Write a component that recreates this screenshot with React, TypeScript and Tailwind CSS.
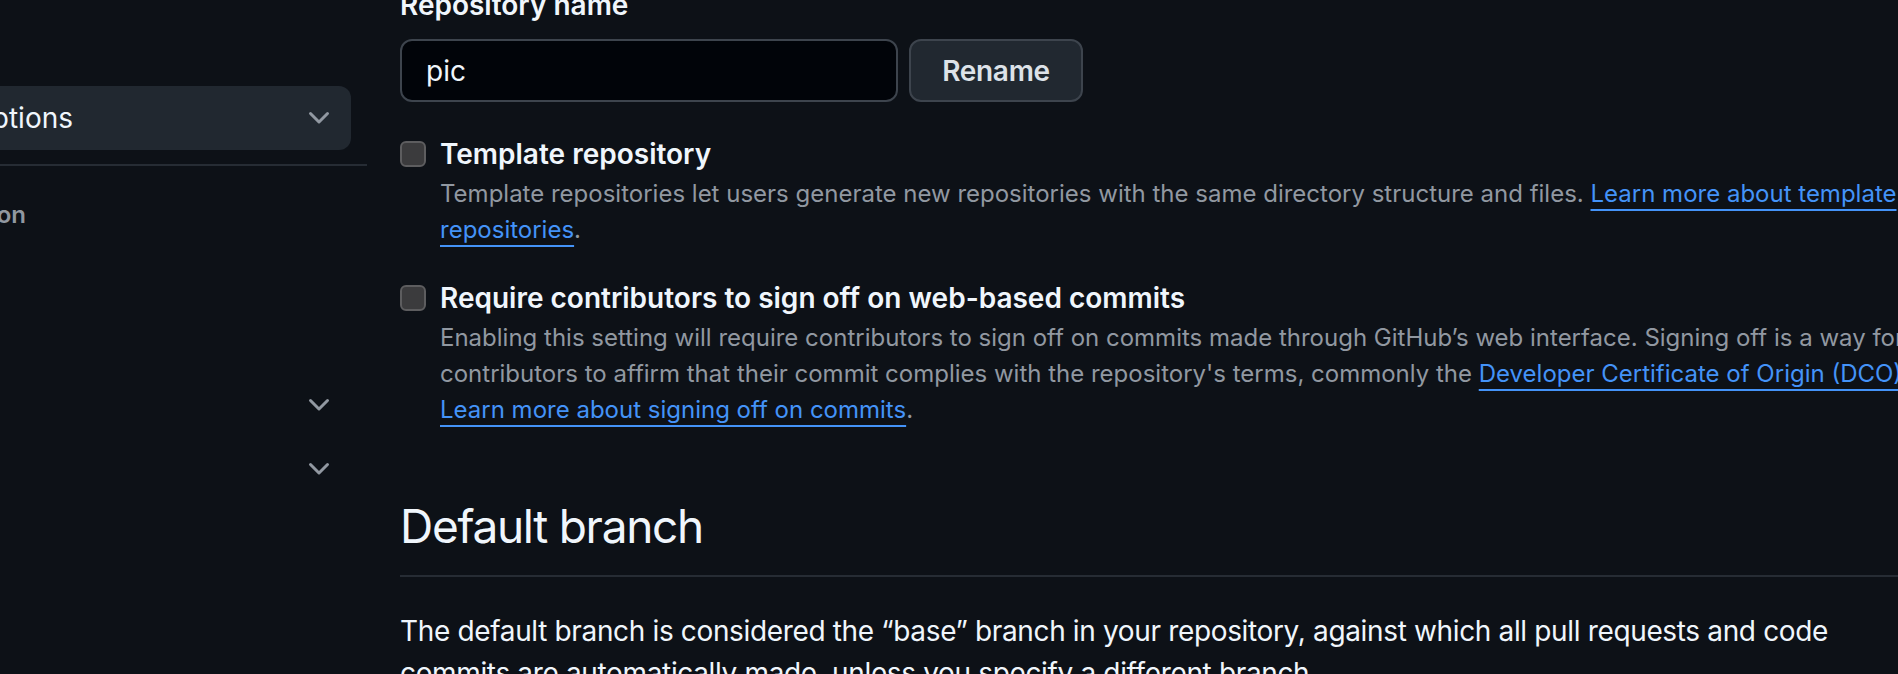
import React from "react";

function Chevron() {
  return (
    <svg width="32" height="32" viewBox="0 0 16 16" fill="#9198a1" aria-hidden="true">
      <path d="M12.78 5.22a.749.749 0 0 1 0 1.06l-4.25 4.25a.749.749 0 0 1-1.06 0L3.22 6.28a.749.749 0 1 1 1.06-1.06L8 8.939l3.72-3.719a.749.749 0 0 1 1.06 0Z" />
    </svg>
  );
}

function Checkbox() {
  return (
    <span className="mt-[7px] block h-[26px] w-[26px] shrink-0 rounded-[6px] border-2 border-[#5d5d5f] bg-[#3b3b3d]" />
  );
}

const linkCls =
  "text-[#4493f8] underline decoration-[2px] underline-offset-[7px]";

export default function App() {
  return (
    <div className="flex h-[674px] w-[1898px] overflow-hidden bg-[#0d1117] font-['Inter','Noto_Sans',sans-serif] antialiased">
      {/* Sidebar */}
      <aside className="w-[400px] shrink-0 pt-[86px]">
        <div className="w-[367px]">
          <div className="-ml-[20px] flex h-[64px] w-[371px] items-center rounded-[12px] bg-[#212830] pr-[16px]">
            <div className="flex w-[93px] shrink-0 justify-end">
              <span className="whitespace-nowrap text-[28px] text-[#f0f6fc]">Repository options</span>
            </div>
            <div className="flex-1" />
            <Chevron />
          </div>
          <div className="mt-[14px] h-[2px] w-[367px] bg-[#262c34]" />
          <div className="mt-[31px] flex w-[26px] justify-end">
            <span className="whitespace-nowrap text-[24px] font-semibold leading-[36px] text-[#9198a1]">
              Code and automation
            </span>
          </div>
          <div className="mt-[12px] flex flex-col pr-[32px]">
            <div className="h-[64px]" />
            <div className="h-[64px]" />
            <div className="flex h-[64px] items-center justify-end">
              <Chevron />
            </div>
            <div className="flex h-[63px] items-center justify-end">
              <Chevron />
            </div>
          </div>
        </div>
      </aside>

      {/* Main */}
      <main className="w-[1600px] shrink-0 -mt-[13px]">
        <label className="block text-[28px] font-semibold leading-[36px] text-[#f0f6fc]">
          Repository name
        </label>
        <div className="mt-[16px] flex gap-[11px]">
          <div className="flex h-[63px] w-[498px] items-center rounded-[12px] border-2 border-[#3d444d] bg-[#010409] px-[24px] text-[28px] text-[#f0f6fc]">
            pic
          </div>
          <button className="h-[63px] w-[174px] rounded-[12px] border-2 border-[#3d444d] bg-[#212830] text-[28px] font-semibold tracking-[-0.3px] text-[#dde2e8]">
            Rename
          </button>
        </div>

        <div className="mt-[32px] flex gap-[14px]">
          <Checkbox />
          <div>
            <div className="text-[28px] font-semibold leading-[40px] text-[#f0f6fc]">
              Template repository
            </div>
            <p className="mt-[2px] whitespace-nowrap text-[24px] leading-[36px] text-[#9198a1]">
              Template repositories let users generate new repositories with the same directory structure and files.{" "}
              <a className={linkCls}>Learn more about template</a>
              <br />
              <a className={linkCls}>repositories</a>.
            </p>
          </div>
        </div>

        <div className="mt-[30px] flex gap-[14px]">
          <Checkbox />
          <div>
            <div className="text-[28px] font-semibold leading-[40px] text-[#f0f6fc]">
              Require contributors to sign off on web-based commits
            </div>
            <p className="mt-[2px] whitespace-nowrap text-[24px] leading-[36px] text-[#9198a1]">
              Enabling this setting will require contributors to sign off on commits made through GitHub’s web interface. Signing off is a way for
              <br />
              contributors to affirm that their commit complies with the repository's terms, commonly the{" "}
              <a className={linkCls}>Developer Certificate of Origin (DCO)</a>.
              <br />
              <a className={linkCls}>Learn more about signing off on commits</a>.
            </p>
          </div>
        </div>

        <h2 className="mt-[68px] text-[46px] font-normal leading-[60px] tracking-[-1.3px] text-[#f0f6fc]">
          Default branch
        </h2>
        <div className="mt-[19px] h-[2px] w-full bg-[#262c34]" />
        <p className="mt-[33px] whitespace-nowrap text-[28px] leading-[42px] tracking-[-0.35px] text-[#f0f6fc]">
          The default branch is considered the “base” branch in your repository, against which all pull requests and code
          <br />
          commits are automatically made, unless you specify a different branch.
        </p>
      </main>
    </div>
  );
}
